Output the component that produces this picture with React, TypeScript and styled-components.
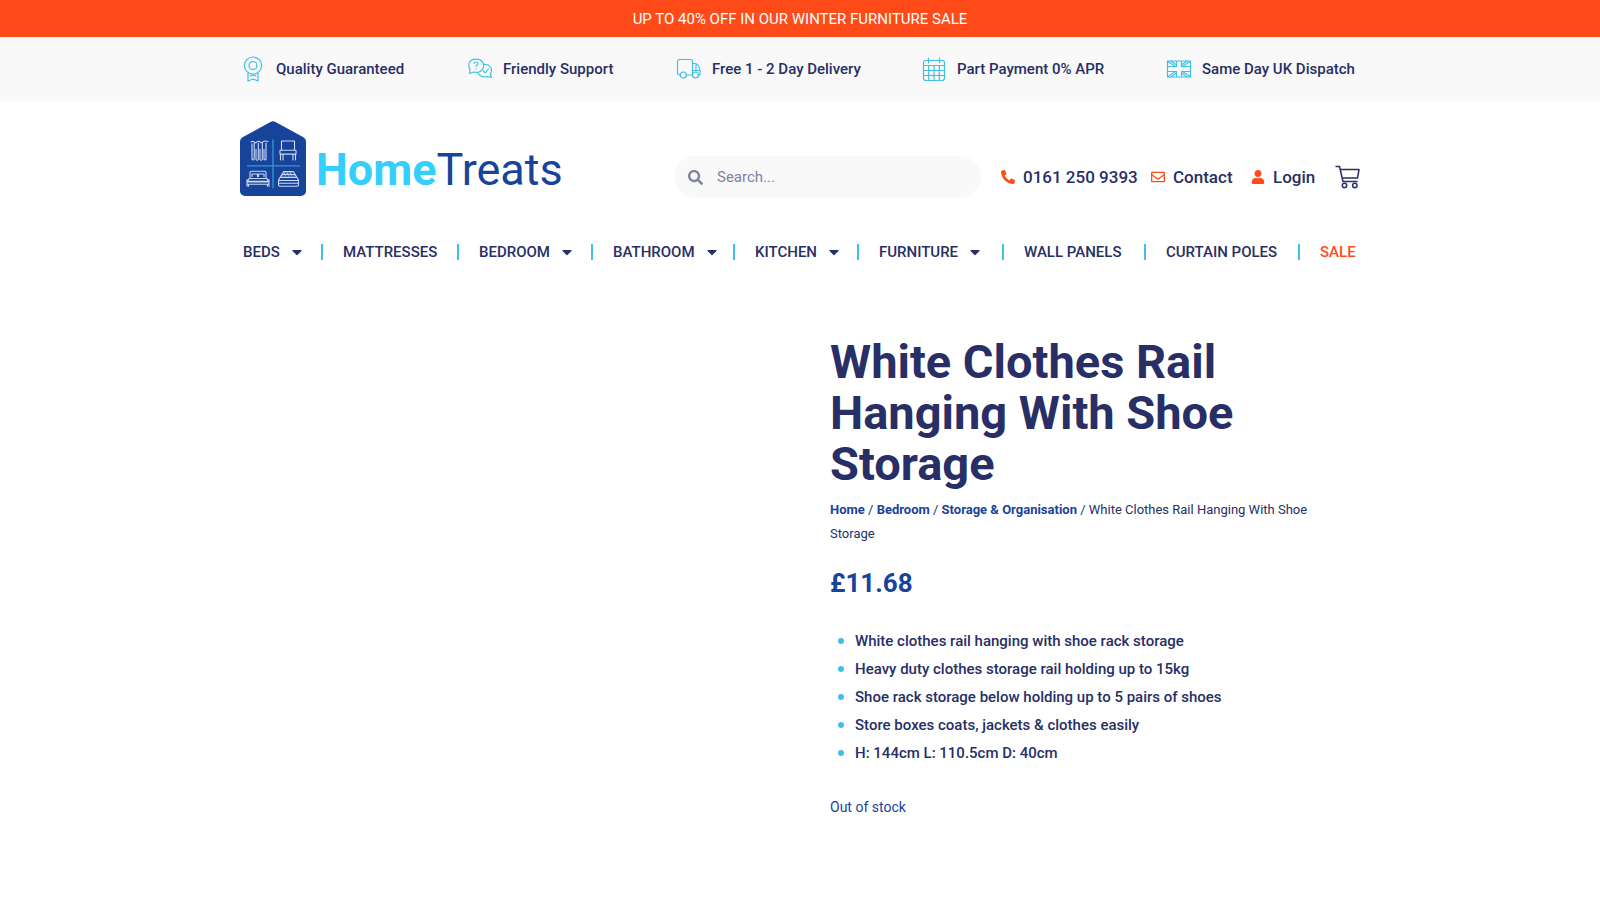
import React from 'react';
import styled, { createGlobalStyle } from 'styled-components';
import { FaCaretDown, FaPhoneAlt, FaRegEnvelope, FaSearch, FaUser } from 'react-icons/fa';

const navy = '#272f66';
const blue = '#17439b';
const cyan = '#3ec1e3';
const orange = '#ff4b19';

const GlobalStyle = createGlobalStyle`
  *, *::before, *::after { box-sizing: border-box; }
  body {
    margin: 0;
    background: #fff;
    color: ${navy};
    font-family: Roboto, "Liberation Sans", sans-serif;
    font-size: 15px;
    font-weight: 500;
    line-height: 24px;
  }
  a { color: inherit; text-decoration: none; }
  ul, ol, p, h1 { margin: 0; padding: 0; list-style: none; }
`;

const Container = styled.div`
  width: 100%;
  max-width: 1140px;
  margin: 0 auto;
  padding: 0 10px;
`;

const PromoBar = styled.p`
  padding: 7px 10px 6px;
  background: ${orange};
  color: #fff;
  font-weight: 400;
  text-align: center;
`;

const TrustBar = styled.section`
  background: #f9f9f9;
`;

const TrustList = styled.ul`
  display: grid;
  grid-template-columns: 227fr 209fr 245fr 245fr 194fr;
  align-items: center;
  min-height: 64px;
`;

const TrustItem = styled.li`
  display: flex;
  align-items: center;
  gap: 10px;
  white-space: nowrap;
`;

const LineIcon = styled.svg`
  flex: none;
  width: 26px;
  height: 26px;
  fill: none;
  stroke: ${cyan};
  stroke-width: 1.2;
  stroke-linecap: round;
  stroke-linejoin: round;
`;

const HeaderRow = styled(Container)`
  display: flex;
  align-items: flex-start;
  justify-content: space-between;
  padding-top: 20px;
`;

const LogoLink = styled.a`
  display: flex;
  align-items: flex-end;
  gap: 10px;
`;

const House = styled.svg`
  width: 66px;
  height: 75px;
`;

const Wordmark = styled.span`
  color: ${blue};
  font-size: 45px;
  font-weight: 400;
  line-height: 52px;
`;

const WordmarkStrong = styled.strong`
  color: #36cffc;
  font-weight: 700;
`;

const HeaderTools = styled.div`
  display: flex;
  align-items: center;
  padding-top: 35px;
`;

const SearchForm = styled.form`
  display: flex;
  align-items: center;
  gap: 12px;
  width: 307px;
  height: 42px;
  margin-right: 20px;
  padding: 0 14px;
  border-radius: 21px;
  background: #f9f9f9;
  color: #7d82a3;
`;

const SearchInput = styled.input`
  flex: 1;
  min-width: 0;
  border: 0;
  outline: 0;
  background: none;
  color: ${navy};
  font: inherit;
  font-weight: 400;
  &::placeholder { color: #7d82a3; opacity: 1; }
`;

const ContactList = styled.ul`
  display: grid;
  grid-template-columns: 150px 100px 84px;
`;

const ContactLink = styled.a`
  display: flex;
  align-items: center;
  gap: 8px;
  font-size: 17px;
  white-space: nowrap;
  svg { flex: none; width: 14px; height: 14px; color: ${orange}; }
`;

const CartButton = styled.button`
  display: flex;
  padding: 0;
  border: 0;
  background: none;
  color: ${navy};
  cursor: pointer;
`;

const NavList = styled.ul`
  display: grid;
  grid-template-columns: 83fr 136fr 134fr 142fr 124fr 145fr 142fr 154fr 60fr;
  padding-top: 46px;
`;

const NavItem = styled.li<{ $sale?: boolean }>`
  display: flex;
  align-items: center;
  height: 16px;
  padding-left: 20px;
  border-right: 2px solid ${cyan};
  color: ${({ $sale }) => ($sale ? orange : navy)};
  white-space: nowrap;
  &:first-child { padding-left: 3px; }
  &:last-child { border-right: 0; }
`;

const NavLink = styled.a`
  display: flex;
  align-items: center;
  gap: 9px;
`;

const Product = styled.main`
  display: grid;
  grid-template-columns: 1fr 1fr;
  gap: 60px;
  padding-top: 76px;
`;

const Title = styled.h1`
  padding-right: 100px;
  font-size: 47px;
  font-weight: 700;
  line-height: 51px;
`;

const Breadcrumb = styled.nav`
  padding: 9px 40px 0 0;
  font-size: 13px;
  font-weight: 400;
  a { color: ${blue}; font-weight: 700; }
`;

const Price = styled.p`
  padding-top: 20px;
  color: ${blue};
  font-size: 26px;
  font-weight: 700;
  line-height: 34px;
`;

const Features = styled.ul`
  padding-top: 27px;
`;

const Feature = styled.li`
  display: flex;
  align-items: center;
  gap: 11px;
  padding-left: 8px;
  line-height: 28px;
  &::before {
    content: "";
    width: 6px;
    height: 6px;
    border-radius: 50%;
    background: ${cyan};
  }
`;

const Stock = styled.p`
  padding: 28px 0 60px;
  color: ${blue};
  font-size: 14px;
  font-weight: 400;
`;

const trustItems = [
  {
    label: 'Quality Guaranteed',
    icon: (
      <>
        <circle cx="13" cy="9.6" r="8.6" />
        <circle cx="13" cy="9.6" r="4" />
        <path d="M8 17v8l5-2 5 2v-8M10 20l3-1 3 1" />
      </>
    ),
  },
  {
    label: 'Friendly Support',
    icon: (
      <>
        <path d="M2.5 17.5l.7-4C-.2 8 3 3.2 9 3.2s9 4.200 7 9c-1 3.200-5 5-9 3.800z" />
        <path d="M16.800 8.500c6-.8 9.500 4.500 6.700 9l1 4-4.500-1c-4 1-7.500-.5-9-3.700" />
        <path d="M7 7.500c.3-2 4-2 4 0 0 1.500-2 1.500-2 3M9 12.500v.3M16.500 15l1.800 1.800 3-3.800" />
      </>
    ),
  },
  {
    label: 'Free 1 - 2 Day Delivery',
    icon: (
      <>
        <path d="M4 19H3.500a2 2 0 0 1-2-2V5.500a2 2 0 0 1 2-2h11a2 2 0 0 1 2 2V19H10.500M16.500 7.500h2.500c3 0 4.500 4 5 7V19h-1.500M20 8v6.500M16.500 14.500H24" />
        <circle cx="7.300" cy="19" r="3" />
        <circle cx="19.500" cy="19" r="3" />
      </>
    ),
  },
  {
    label: 'Part Payment 0% APR',
    icon: (
      <path d="M4.500 4.500h17a2 2 0 0 1 2 2V22a2.500 2.500 0 0 1-2.500 2.500H5A2.500 2.500 0 0 1 2.500 22V6.500a2 2 0 0 1 2-2zM7.500 2v5M18.500 2v5M2.500 9.500h21M2.500 14.500h21M2.500 19.500h21M7.700 9.500v15M13 9.500v15M18.300 9.500v15" />
    ),
  },
  {
    label: 'Same Day UK Dispatch',
    icon: (
      <>
        <path d="M1.500 5h23v16h-23zM1.500 10.500h9V5M15.500 5v5.500h9M1.500 15.500h9V21M15.500 21v-5.500h9" />
        <path d="M2 5.500l7.500 5M5 5l5.500 4M24 5.500l-7.500 5M21 5l-5.500 4M2 20.500l7.500-5M5 21l5.500-4M24 20.500l-7.500-5M21 21l-5.500-4" />
      </>
    ),
  },
];

const navItems = [
  { label: 'BEDS', menu: true },
  { label: 'MATTRESSES' },
  { label: 'BEDROOM', menu: true },
  { label: 'BATHROOM', menu: true },
  { label: 'KITCHEN', menu: true },
  { label: 'FURNITURE', menu: true },
  { label: 'WALL PANELS' },
  { label: 'CURTAIN POLES' },
  { label: 'SALE', sale: true },
];

const features = [
  'White clothes rail hanging with shoe rack storage',
  'Heavy duty clothes storage rail holding up to 15kg',
  'Shoe rack storage below holding up to 5 pairs of shoes',
  'Store boxes coats, jackets & clothes easily',
  'H: 144cm L: 110.5cm D: 40cm',
];

function HouseMark() {
  return (
    <House viewBox="0 0 66 77" preserveAspectRatio="none" fill="none" aria-hidden="true">
      <path
        d="M30.500 1q2.500-1.300 5 0L63 16.500q3 1.700 3 5V72a5 5 0 0 1-5 5H5a5 5 0 0 1-5-5V21.500q0-3.300 3-5z"
        fill={blue}
      />
      <path d="M33 19v50M7 46h53" stroke="#329ad7" strokeWidth="1.300" />
      <g stroke="#c9d9fa" strokeWidth="1.100" strokeLinecap="round" strokeLinejoin="round">
        <path d="M11 21.500q1.500-1.500 3 0t3 0 3 0 3 0 5-.5M12 23.500V39q1 2 2.200 0V23M16 29v10.500q1.200 1.500 2.300 0V23M20 29v10.500q1.200 1.500 2.300 0V23M24 29v10.500q1 1 2 0V22.500" />
        <path d="M41.500 20.500h13V30h-13zM40 30h16v4H40zM40.500 34v6M43 34v6M53 34v6M55.500 34v6" />
        <path d="M10 59v-6.500q0-1 1-1h14q1 0 1 1V59M12 57v-2.500h5.500V57M18.500 57v-2.500H24V57M9 59h18l1.500 3H7.500zM7 60v7M29 60v7M7 62.500h22v2.500H7zM8.500 65v2M27.500 65v2" />
        <path d="M43.500 52h10l5 8.500v5q0 1.500-1.500 1.500H40q-1.500 0-1.500-1.500v-5zM38.500 61h20M38.500 64h20M42 55h13M40.500 58h16" />
        <path d="M44 53.500h9M42 56.500h13" strokeDasharray="1 2" />
      </g>
    </House>
  );
}

export default function App() {
  return (
    <>
      <GlobalStyle />
      <PromoBar>UP TO 40% OFF IN OUR WINTER FURNITURE SALE</PromoBar>
      <TrustBar>
        <Container>
          <TrustList>
            {trustItems.map(({ label, icon }) => (
              <TrustItem key={label}>
                <LineIcon viewBox="0 0 26 26" aria-hidden="true">{icon}</LineIcon>
                {label}
              </TrustItem>
            ))}
          </TrustList>
        </Container>
      </TrustBar>
      <header>
        <HeaderRow>
          <LogoLink href="#home">
            <HouseMark />
            <Wordmark><WordmarkStrong>Home</WordmarkStrong>Treats</Wordmark>
          </LogoLink>
          <HeaderTools>
            <SearchForm role="search">
              <FaSearch size={15} aria-hidden="true" />
              <SearchInput type="search" placeholder="Search..." aria-label="Search" />
            </SearchForm>
            <ContactList>
              <li><ContactLink href="tel:01612509393"><FaPhoneAlt />0161 250 9393</ContactLink></li>
              <li><ContactLink href="#contact"><FaRegEnvelope />Contact</ContactLink></li>
              <li><ContactLink href="#login"><FaUser />Login</ContactLink></li>
            </ContactList>
            <CartButton type="button" aria-label="Cart">
              <svg width="25" height="24" viewBox="0 0 25 24" fill="none" stroke="currentColor" strokeWidth="1.500" strokeLinecap="round" strokeLinejoin="round" aria-hidden="true">
                <path d="M1 1.500h3.500L8 16.500h14M5.300 4.500H24L22.500 13H7.300" />
                <circle cx="9.500" cy="20.500" r="2.200" />
                <circle cx="19.800" cy="20.500" r="2.200" />
              </svg>
            </CartButton>
          </HeaderTools>
        </HeaderRow>
        <Container as="nav" aria-label="Main">
          <NavList>
            {navItems.map(({ label, menu, sale }) => (
              <NavItem key={label} $sale={sale}>
                <NavLink href={`#${label.toLowerCase().replace(' ', '-')}`}>
                  {label}
                  {menu && <FaCaretDown size={16} aria-hidden="true" />}
                </NavLink>
              </NavItem>
            ))}
          </NavList>
        </Container>
      </header>
      <Container>
        <Product>
          <div />
          <div>
            <Title>White Clothes Rail Hanging With Shoe Storage</Title>
            <Breadcrumb aria-label="Breadcrumb">
              <a href="#home">Home</a> / <a href="#bedroom">Bedroom</a> /{' '}
              <a href="#storage">Storage &amp; Organisation</a> / White Clothes Rail Hanging With Shoe Storage
            </Breadcrumb>
            <Price>£11.68</Price>
            <Features>
              {features.map((text) => <Feature key={text}>{text}</Feature>)}
            </Features>
            <Stock>Out of stock</Stock>
          </div>
        </Product>
      </Container>
    </>
  );
}
